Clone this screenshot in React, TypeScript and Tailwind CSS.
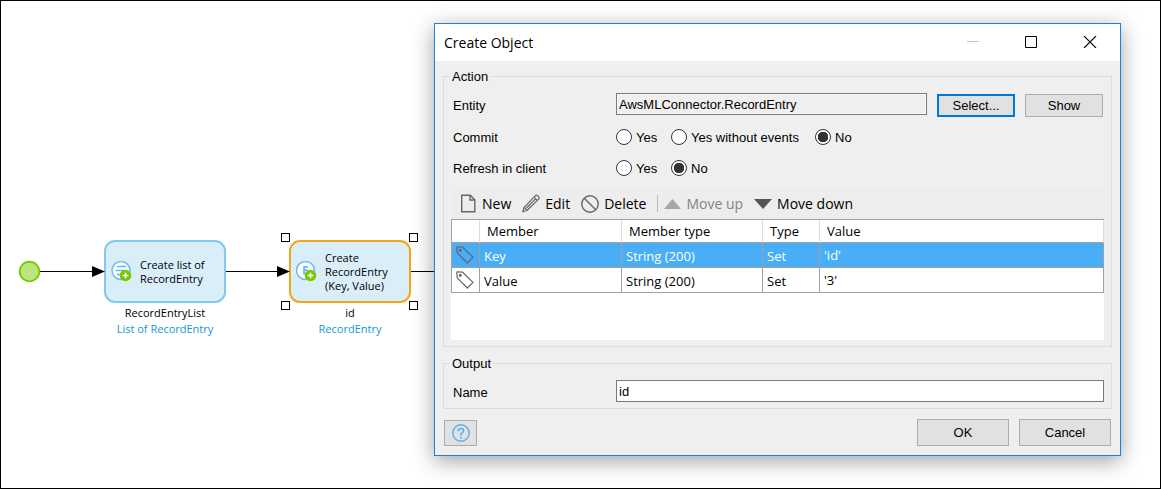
import React from 'react';

const SEGOE = "font-['Open_Sans',sans-serif]";
const BUTTON = 'border border-[#adadad] bg-[#e1e1e1] text-center leading-4';

function PlusBadge() {
  return (
    <g>
      <circle cx="14.5" cy="14.5" r="5.8" fill="#76ca02" />
      <path d="M14.5 11.7v5.600M11.700 14.500h5.600" stroke="#fff" strokeWidth="1.600" />
    </g>
  );
}

function ListIcon() {
  return (
    <svg width="21" height="21" viewBox="0 0 21 21" fill="none" aria-hidden="true">
      <circle cx="10" cy="9.500" r="9" fill="#fff" stroke="#6cbdf5" strokeWidth="1.500" />
      <path d="M6 5.500h9M4.500 9.500h9M6 13.500h4" stroke="#5fb8f5" strokeWidth="1.500" />
      <PlusBadge />
    </svg>
  );
}

function EntityIcon() {
  return (
    <svg width="21" height="21" viewBox="0 0 21 21" fill="none" aria-hidden="true">
      <circle cx="9.500" cy="9.500" r="9" fill="#fff" stroke="#6cbdf5" strokeWidth="1.500" />
      <path d="M12 5.800H8V12.700H12M8 9.200H11.600" stroke="#5fb8f5" strokeWidth="1.700" />
      <PlusBadge />
    </svg>
  );
}

function TagIcon() {
  return (
    <svg width="18" height="18" viewBox="0 0 18 18" fill="none" stroke="#666" strokeWidth="1.2" className="block" aria-hidden="true">
      <path d="M0.8 1.6Q0.8 0.8 1.6 0.8L6.6 1.2L17 11.4L11.4 17L1.2 6.8Z" strokeLinejoin="round" />
      <circle cx="4.3" cy="4.3" r="0.9" fill="#666" />
    </svg>
  );
}

function Activity({ icon, lines, selected }: { icon: React.ReactNode; lines: string[]; selected?: boolean }) {
  return (
    <div
      className={`flex h-[63px] w-[122px] items-center gap-2 rounded-[11px] border-2 bg-[#daeefa] pl-[5px] ${
        selected ? 'border-[#f0a818]' : 'border-[#82c9ee]'
      }`}
    >
      {icon}
      <p className="text-[11px] leading-[14px]">
        {lines.map((line) => (
          <span key={line} className="block whitespace-nowrap">
            {line}
          </span>
        ))}
      </p>
    </div>
  );
}

function Caption({ name, type }: { name: string; type: string }) {
  return (
    <div className="pt-[2px] text-center text-[11px] leading-4">
      <p>{name}</p>
      <p className="text-[#1496dc]">{type}</p>
    </div>
  );
}

function Handle({ className }: { className: string }) {
  return <span className={`absolute size-[9px] border border-black bg-white ${className}`} />;
}

function Radio({ name, label, checked }: { name: string; label: string; checked?: boolean }) {
  return (
    <label className="flex items-center gap-1 whitespace-nowrap">
      <input
        type="radio"
        name={name}
        defaultChecked={checked}
        className="size-4 shrink-0 appearance-none rounded-full border border-[#333] bg-white checked:bg-[radial-gradient(circle,#333_0_5px,#fff_5.5px)]"
      />
      <span className="pt-px leading-4">{label}</span>
    </label>
  );
}

function Group({ title, children }: { title: string; children: React.ReactNode }) {
  return (
    <fieldset className="min-w-0 border border-[#dcdcdc] px-[7px]">
      <legend className="ml-[-1px] px-[2px] leading-[15px]">{title}</legend>
      {children}
    </fieldset>
  );
}

function Diagram() {
  return (
    <div className={`absolute inset-0 overflow-hidden ${SEGOE}`}>
      <svg className="absolute top-[250px] left-0" width="440" height="40" viewBox="0 0 440 40" aria-hidden="true">
        <path d="M39 20.5H95M224 20.5H280M409 20.5H440" stroke="#000" />
        <circle cx="28.5" cy="20.5" r="9.8" fill="#bce580" stroke="#76ca02" strokeWidth="1.8" />
      </svg>
      <div className="absolute top-[239px] left-[103px]">
        <Activity icon={<ListIcon />} lines={['Create list of', 'RecordEntry']} />
        <Caption name="RecordEntryList" type="List of RecordEntry" />
      </div>
      <div className="absolute top-[239px] left-[288px]">
        <Activity icon={<EntityIcon />} lines={['Create', 'RecordEntry', '(Key, Value)']} selected />
        <Caption name="id" type="RecordEntry" />
      </div>
      <svg className="absolute top-[250px] left-0" width="440" height="40" viewBox="0 0 440 40" aria-hidden="true">
        <path d="M91 15L104 20.500L91 26ZM276 15L289 20.500L276 26Z" />
      </svg>
      <Handle className="top-[232px] left-[280px]" />
      <Handle className="top-[232px] left-[408px]" />
      <Handle className="top-[300px] left-[280px]" />
      <Handle className="top-[300px] left-[408px]" />
    </div>
  );
}

function Toolbar() {
  return (
    <div className={`flex h-[31px] items-center bg-[#ededed] pl-[9px] text-[14px] leading-5 ${SEGOE}`}>
      <button className="flex items-center gap-[5px]">
        <svg width="17" height="19" viewBox="0 0 17 19" fill="none" stroke="#666" strokeWidth="1.4" aria-hidden="true">
          <path d="M1.7 1.2h8.600l4.500 4.500v12h-13.100zM10 1.200v4.800h4.800" />
        </svg>
        New
      </button>
      <button className="ml-[11px] flex items-center gap-[5px]">
        <svg width="18" height="19" viewBox="0 0 18 19" fill="none" stroke="#666" strokeWidth="1.2" strokeLinejoin="round" aria-hidden="true">
          <path d="M0.800 17.800L2.200 13.300L13.400 1.600Q14.400 0.700 15.400 1.600L16.800 3Q17.600 4.100 16.700 5.100L5.200 16.300ZM2.200 13.300L5.200 16.300M12 3.200L15.200 6.400M4.500 14L13.300 5.200" />
        </svg>
        Edit
      </button>
      <button className="ml-[11px] flex items-center gap-[5px]">
        <svg width="18" height="18" viewBox="0 0 18 18" fill="none" stroke="#666" strokeWidth="1.400" aria-hidden="true">
          <circle cx="9" cy="9" r="8.200" />
          <path d="M3.200 3.200L14.800 14.800" />
        </svg>
        Delete
      </button>
      <span className="mr-[6px] ml-[11px] h-[17px] w-px bg-[#bbb]" />
      <button disabled className="flex items-center gap-[5px] text-[#838383]">
        <svg width="17" height="10" viewBox="0 0 17 10" fill="#a6a6a6" aria-hidden="true">
          <path d="M0 10L8.500 0L17 10z" />
        </svg>
        Move up
      </button>
      <button className="ml-[11px] flex items-center gap-[5px]">
        <svg width="18" height="10" viewBox="0 0 18 10" fill="#555" aria-hidden="true">
          <path d="M0 0H18L9 10z" />
        </svg>
        Move down
      </button>
    </div>
  );
}

const MEMBERS = [
  { member: 'Key', type: 'String (200)', action: 'Set', value: "'id'", selected: true },
  { member: 'Value', type: 'String (200)', action: 'Set', value: "'3'", selected: false },
];

function MemberTable() {
  const head = 'border-b border-b-[#a0a0a0] border-l border-l-[#dcdcdc] pl-[7px] font-normal';
  const cell = 'border-b border-l border-[#a0a0a0] pl-1';
  return (
    <div className={`min-h-[121px] bg-white text-[13px] leading-4 ${SEGOE}`}>
      <table className="w-full table-fixed border-separate border-spacing-0 border-t border-[#a0a0a0] text-left">
        <colgroup>
          <col className="w-[28px]" />
          <col className="w-[142px]" />
          <col className="w-[141px]" />
          <col className="w-[57px]" />
          <col />
        </colgroup>
        <thead>
          <tr className="h-[23px]">
            <th aria-label="Icon" className="border-b border-l border-[#a0a0a0]" />
            <th className={head}>Member</th>
            <th className={head}>Member type</th>
            <th className={head}>Type</th>
            <th className={`${head} border-r border-r-[#dcdcdc]`}>Value</th>
          </tr>
        </thead>
        <tbody>
          {MEMBERS.map((row) => (
            <tr key={row.member} className={`h-[25px] ${row.selected ? 'bg-[#48aef8] text-white' : ''}`}>
              <td className={cell}>
                <TagIcon />
              </td>
              <td className={`${cell} pt-[2px]`}>{row.member}</td>
              <td className={`${cell} pt-[2px]`}>{row.type}</td>
              <td className={`${cell} pt-[2px]`}>{row.action}</td>
              <td className={`${cell} border-r pb-px`}>{row.value}</td>
            </tr>
          ))}
        </tbody>
      </table>
    </div>
  );
}

function CreateObjectDialog() {
  return (
    <div
      role="dialog"
      aria-labelledby="dialog-title"
      className="absolute top-[22px] right-[39px] left-[433px] border border-[#1883d7] bg-[#efefef] shadow-[0_5px_20px_rgba(0,0,0,0.38)]"
    >
      <header className="flex h-[37px] items-center bg-white pr-[23px] pl-[9px]">
        <h1 id="dialog-title" className={`flex-1 text-[14px] leading-5 ${SEGOE}`}>
          Create Object
        </h1>
        <div className="flex gap-[46px] pb-px">
          <button disabled aria-label="Minimize">
            <svg width="12" height="12" viewBox="0 0 12 12" stroke="#c4c4c4" className="block">
              <path d="M0 5.500H12" />
            </svg>
          </button>
          <button aria-label="Maximize">
            <svg width="12" height="12" viewBox="0 0 12 12" fill="none" stroke="#000" className="block">
              <path d="M0.500 0.500H11.500V11.500H0.500Z" />
            </svg>
          </button>
          <button aria-label="Close">
            <svg width="14" height="12" viewBox="0 0 14 12" stroke="#000" strokeWidth="1.100" className="block">
              <path d="M1 0L13 12M13 0L1 12" />
            </svg>
          </button>
        </div>
      </header>

      <form className="px-2 pt-2 pb-[9px]" onSubmit={(event) => event.preventDefault()}>
        <Group title="Action">
          <div className="mt-[9px] flex h-6 pr-px pl-[2px]">
            <label htmlFor="entity" className="w-[163px] pt-[5px] leading-4">
              Entity
            </label>
            <input
              id="entity"
              readOnly
              defaultValue="AwsMLConnector.RecordEntry"
              className="mr-[10px] h-[22px] min-w-0 flex-1 border border-[#7a7a7a] bg-[#efefef] px-[2px] leading-4 shadow-[inset_0_0_0_1px_#fafafa]"
            />
            <button className="mt-px mr-[10px] h-[23px] w-[78px] border-2 border-[#0078d7] bg-[#e1e1e1] leading-4">
              Select...
            </button>
            <button className={`mt-px h-[23px] w-[78px] ${BUTTON}`}>Show</button>
          </div>

          <div role="radiogroup" aria-labelledby="commit-label" className="mt-3 flex h-4 items-center pl-[2px]">
            <span id="commit-label" className="w-[163px] pt-[2px] leading-4">
              Commit
            </span>
            <div className="grid grid-cols-[55px_144px_auto]">
              <Radio name="commit" label="Yes" />
              <Radio name="commit" label="Yes without events" />
              <Radio name="commit" label="No" checked />
            </div>
          </div>

          <div role="radiogroup" aria-labelledby="refresh-label" className="mt-[15px] mb-3 flex h-4 items-center pl-[2px]">
            <span id="refresh-label" className="w-[163px] pt-[2px] leading-4">
              Refresh in client
            </span>
            <div className="grid grid-cols-[55px_144px_auto]">
              <Radio name="refresh" label="Yes" />
              <Radio name="refresh" label="No" checked />
            </div>
          </div>

          <Toolbar />
          <div className="mb-[6px]">
            <MemberTable />
          </div>
        </Group>

        <div className="mt-[9px]">
          <Group title="Output">
            <div className="mt-[9px] mb-[6px] flex pl-[2px]">
              <label htmlFor="output-name" className="w-[163px] pt-[5px] leading-4">
                Name
              </label>
              <input
                id="output-name"
                defaultValue="id"
                className="h-[22px] min-w-0 flex-1 border border-[#7a7a7a] bg-white px-[2px] leading-4"
              />
            </div>
          </Group>
        </div>

        <div className="mt-[10px] flex items-end gap-[10px] px-px">
          <button aria-label="Help" className={`mr-auto flex h-[26px] w-[33px] items-center justify-center ${BUTTON}`}>
            <svg width="18" height="18" viewBox="0 0 18 18" fill="none" stroke="#4fb2f8" strokeWidth="1.400" aria-hidden="true">
              <circle cx="9" cy="9" r="8.200" />
              <path d="M6.400 7.200V6.600Q6.600 4.500 9 4.500Q11.600 4.500 11.600 6.700Q11.600 7.900 10.200 8.600Q9 9.300 9 10.200V11.500M9 12.700V14.500" strokeWidth="1.600" />
            </svg>
          </button>
          <button className={`h-[27px] w-[92px] ${BUTTON}`}>OK</button>
          <button className={`h-[27px] w-[92px] ${BUTTON}`}>Cancel</button>
        </div>
      </form>
    </div>
  );
}

export default function App() {
  return (
    <main className="relative min-h-screen border border-black bg-white font-['Liberation_Sans',Arial,sans-serif] text-[13px] text-black">
      <Diagram />
      <CreateObjectDialog />
    </main>
  );
}
